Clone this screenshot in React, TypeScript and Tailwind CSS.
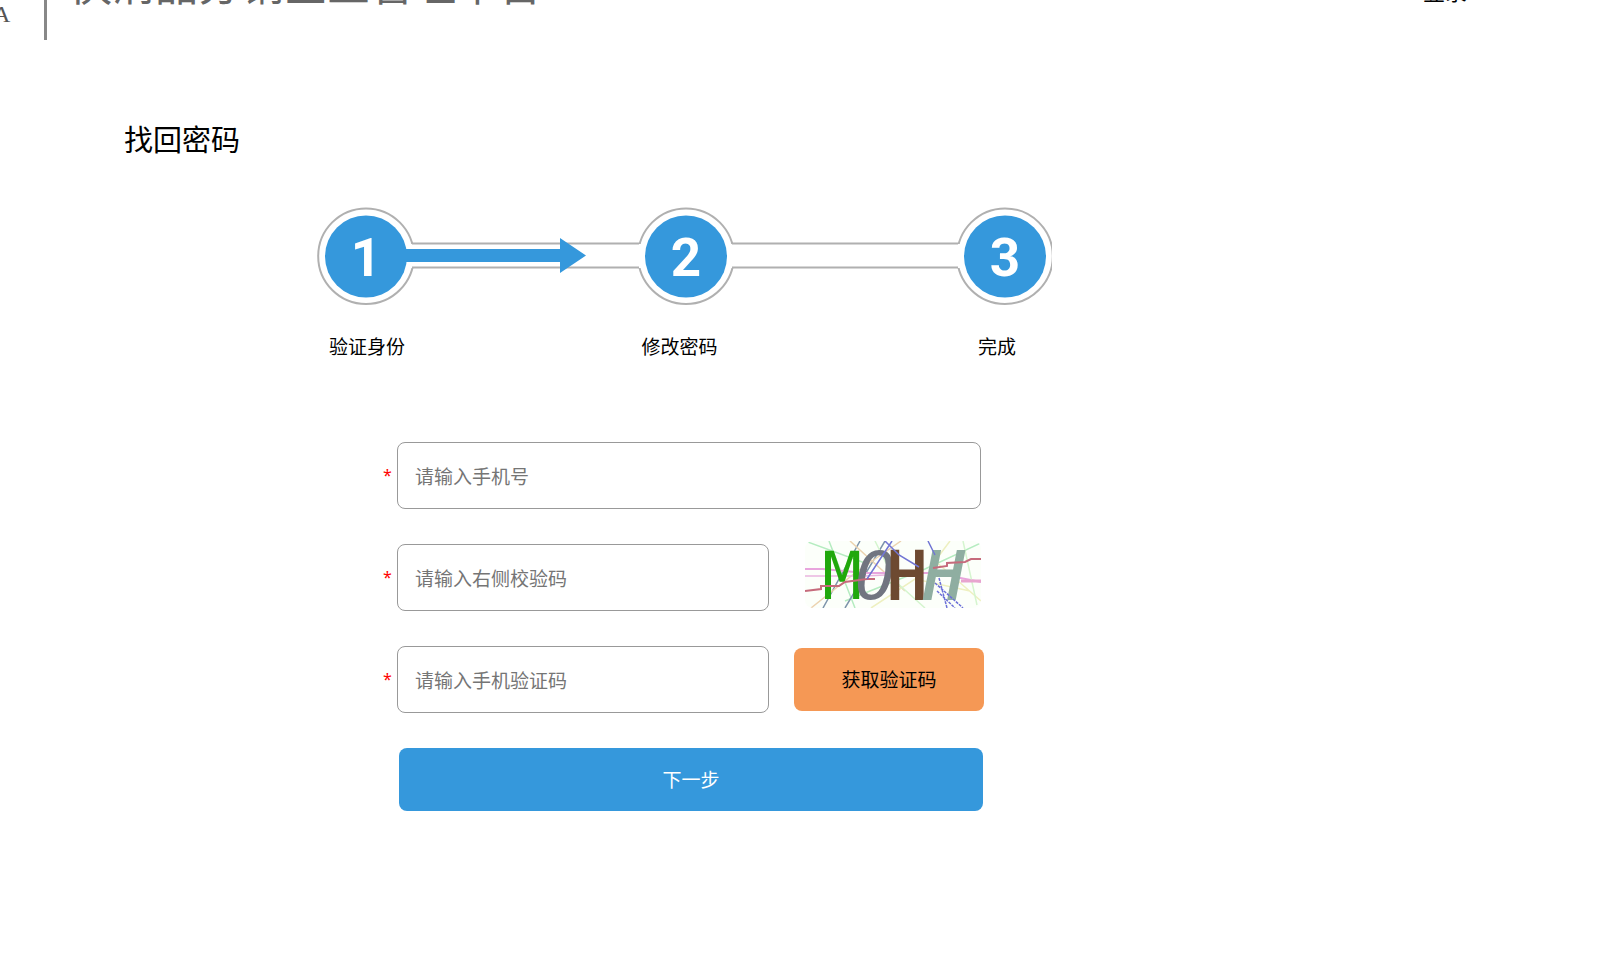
const steps = [
  { no: "1", cx: 49 },
  { no: "2", cx: 369 },
  { no: "3", cx: 688 },
];

const inputClass =
  "h-[67px] rounded-lg border border-[#999] bg-white px-[17px] pt-0.5 text-[19px] text-black placeholder:text-[#757575] outline-none";

function Header() {
  return (
    <header className="flex h-10 items-start overflow-hidden">
      <div className="flex w-11 shrink-0 items-start">
        <span className="-ml-[7px] font-['Liberation_Serif'] text-2xl leading-7 text-[#555]">A</span>
      </div>
      <div className="h-full w-[3px] shrink-0 bg-[#888]" />
      <h1 className="-mt-10 ml-[22px] text-[43px] leading-[50px] font-normal whitespace-nowrap text-[#666]">
        快消品分销企业管理平台
      </h1>
      <a href="#login" className="-mt-[25px] mr-[138px] ml-auto text-[22px] leading-8 text-black">
        登录
      </a>
    </header>
  );
}

function StepBar() {
  return (
    <svg viewBox="0 0 735 98" className="block w-full" aria-hidden="true">
      <g fill="#fff" stroke="#b0b0b0" strokeWidth="2">
        {steps.map((s) => (
          <circle key={s.no} cx={s.cx} cy="49.2" r="47.8" />
        ))}
      </g>
      {/* white fill opens the rings where the rails join them */}
      <rect x="88" y="37" width="560" height="24" fill="#fff" />
      <path d="M95 36.5H322M95 60.5H322M415 36.5H641M415 60.5H641" stroke="#b0b0b0" strokeWidth="2" />
      {steps.map((s) => (
        <circle key={s.no} cx={s.cx} cy="49.5" r="41" fill="#3598dc" />
      ))}
      <path d="M85 42H243V31L269 48.5L243 66V55H85Z" fill="#3598dc" />
      {steps.map((s) => (
        <text
          key={s.no}
          x={s.cx}
          y="69"
          textAnchor="middle"
          fill="#fff"
          className="font-[Roboto,sans-serif] text-[53px] font-bold"
        >
          {s.no}
        </text>
      ))}
    </svg>
  );
}

function Captcha() {
  return (
    <svg viewBox="0 0 176 67" className="h-[67px] w-[176px] rounded-lg bg-[#fcfffa]" role="img" aria-label="校验码">
      <g fill="none" strokeWidth="1.5">
        <path d="M0 0L60 22M24 0L50 67M176 2L120 28L40 60" stroke="#b5ecc0" />
        <path d="M55 0L18 67M80 0L40 67" stroke="#7d94aa" />
        <path d="M96 0L50 32L6 67M45 0L100 50" stroke="#ecd3b0" />
        <path d="M0 28H18L60 32H130L176 41" stroke="#e8a5dd" strokeWidth="2" />
        <path d="M0 35H60L100 33" stroke="#e9b5df" />
        <path d="M145 0L130 20L176 60M66 67L110 38L165 50" stroke="#eef0c0" />
        <path d="M70 0L90 40L120 67M158 0L172 64" stroke="#d5f5cf" />
      </g>
      <text y="58" textAnchor="middle" className="font-['DejaVu_Sans_Mono',monospace] text-[66px]">
        <tspan x="37" fill="#20a80c">M</tspan>
        <tspan x="70" fill="#717580" className="italic">O</tspan>
        <tspan x="102" fill="#6d4a31" stroke="#6d4a31" strokeWidth="2">H</tspan>
        <tspan x="139" fill="#8faea1" stroke="#8faea1" strokeWidth="2" className="italic">H</tspan>
      </text>
      <g fill="none" strokeWidth="1.5">
        <path d="M0 50L16 48V45H34L40 41L62 38H70M128 27L142 25V22L160 21L166 18H176" stroke="#c66b7c" strokeWidth="2" />
        <path d="M87 0L62 38M80 0L94 14L114 26M123 0L130 14" stroke="#7276d4" />
        <path d="M134 37L142 67M130 42L158 67M132 50L150 67" stroke="#6c70d8" strokeDasharray="3 1" />
        <path d="M156 40H176" stroke="#e8a5cf" strokeWidth="3" />
      </g>
    </svg>
  );
}

function Required() {
  return <span className="w-[14px] shrink-0 pb-0.5 text-base leading-6 text-[#f00]">*</span>;
}

export default function App() {
  return (
    <div className="min-h-screen bg-white font-['Noto_Sans','Noto_Sans_CJK_SC',sans-serif] text-black">
      <Header />

      <main className="px-[124px] pt-20">
        <h2 className="text-[29px] leading-10 font-normal">找回密码</h2>

        <section className="mt-[47px] ml-[193px] max-w-[735px]">
          <StepBar />
          <ol className="mt-7 flex justify-between pr-9 pl-3 text-[19px] leading-7">
            <li>验证身份</li>
            <li className="pr-6">修改密码</li>
            <li>完成</li>
          </ol>
        </section>

        <form className="mt-[81px] ml-[259px] max-w-[601px]" onSubmit={(e) => e.preventDefault()}>
          <div className="flex flex-col gap-[35px] pr-[3px]">
            <label className="flex items-center">
              <Required />
              <input type="tel" aria-label="手机号" placeholder="请输入手机号" className={`${inputClass} min-w-0 flex-1`} />
            </label>

            <div className="flex items-center justify-between">
              <label className="flex items-center">
                <Required />
                <input type="text" aria-label="校验码" placeholder="请输入右侧校验码" className={`${inputClass} w-[372px]`} />
              </label>
              <button type="button" aria-label="换一张" className="-mt-1.5">
                <Captcha />
              </button>
            </div>

            <div className="-mr-[3px] flex items-center justify-between">
              <label className="flex items-center">
                <Required />
                <input type="text" aria-label="手机验证码" placeholder="请输入手机验证码" className={`${inputClass} w-[372px]`} />
              </label>
              <button type="button" className="h-[63px] w-[190px] rounded-lg bg-[#f59855] pt-0.5 text-[19px]">
                获取验证码
              </button>
            </div>
          </div>

          <div className="mt-[35px] pr-px pl-4">
            <button type="submit" className="h-[63px] w-full rounded-lg bg-[#3598dc] pt-0.5 text-[19px] text-white">
              下一步
            </button>
          </div>
        </form>
      </main>
    </div>
  );
}
